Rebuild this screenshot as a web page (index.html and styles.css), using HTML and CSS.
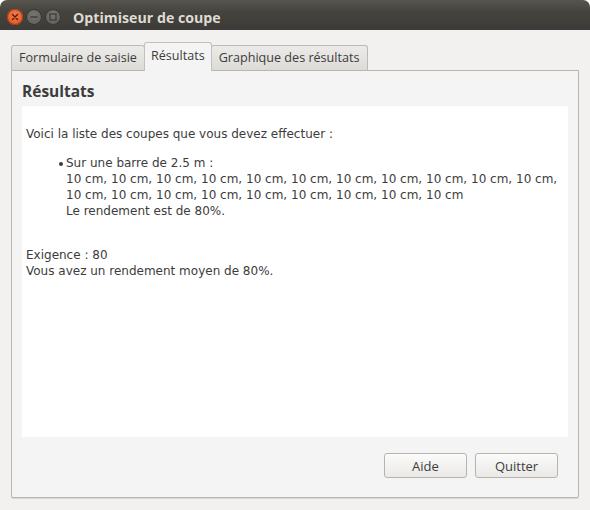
FILE: index.html
```html
<!DOCTYPE html>
<html lang="fr">
<head>
<meta charset="utf-8">
<title>Optimiseur de coupe</title>
<link rel="stylesheet" href="styles.css">
</head>
<body>
<div class="window">
  <div class="titlebar">
    <div class="wbtns">
      <span class="wbtn close"><svg width="16" height="16" viewBox="0 0 16 16"><path d="M5.5 5.5L10.5 10.5M10.5 5.5L5.5 10.5" stroke="#4a1a0c" stroke-width="1.3" stroke-linecap="round"/></svg></span>
      <span class="wbtn"><svg width="16" height="16" viewBox="0 0 16 16"><path d="M4.5 8H11.5" stroke="#3a3936" stroke-width="1.3"/></svg></span>
      <span class="wbtn"><svg width="16" height="16" viewBox="0 0 16 16"><rect x="5" y="5" width="6" height="6" fill="none" stroke="#3a3936" stroke-width="1.2"/></svg></span>
    </div>
    <div class="title">Optimiseur de coupe</div>
  </div>
  <div class="client">
    <div class="tabs">
      <div class="tab">Formulaire de saisie</div>
      <div class="tab active">Résultats</div>
      <div class="tab">Graphique des résultats</div>
    </div>
    <div class="panel">
      <h1 class="heading">Résultats</h1>
      <div class="results">
        <p class="intro">Voici la liste des coupes que vous devez effectuer :</p>
        <ul class="cuts">
          <li>Sur une barre de 2.5 m :<br>10 cm, 10 cm, 10 cm, 10 cm, 10 cm, 10 cm, 10 cm, 10 cm, 10 cm, 10 cm, 10 cm,<br>10 cm, 10 cm, 10 cm, 10 cm, 10 cm, 10 cm, 10 cm, 10 cm, 10 cm<br>Le rendement est de 80%.</li>
        </ul>
        <p class="summary">Exigence : 80<br>Vous avez un rendement moyen de 80%.</p>
      </div>
      <div class="actions">
        <button class="btn">Aide</button>
        <button class="btn">Quitter</button>
      </div>
    </div>
  </div>
</div>
</body>
</html>
```
FILE: styles.css
```css
html, body {
  margin: 0;
  padding: 0;
  background: #ffffff;
}
body {
  width: 590px;
  height: 510px;
  overflow: hidden;
  font-family: "Open Sans", "Noto Sans", sans-serif;
  color: #3c3c3c;
}
.window {
  display: flex;
  flex-direction: column;
  height: 510px;
}
.titlebar {
  height: 30px;
  flex: none;
  display: flex;
  align-items: center;
  background: linear-gradient(#58554f, #45433e 40%, #3c3b37);
  border-radius: 7px 7px 0 0;
  padding-left: 7px;
  box-sizing: border-box;
}
.wbtns {
  display: flex;
  gap: 3px;
  margin-top: 3px;
}
.wbtn {
  width: 16px;
  height: 16px;
  border-radius: 50%;
  background: radial-gradient(circle at 50% 35%, #777570, #5d5b56);
  box-shadow: inset 0 0 0 1px #34332f;
  display: flex;
}
.wbtn.close {
  background: radial-gradient(circle at 50% 35%, #f27a4c, #e0501c);
  box-shadow: inset 0 0 0 1px #a83a12;
}
.title {
  margin-left: 12px;
  margin-top: 4px;
  font-weight: bold;
  font-size: 14.2px;
  color: #dfdbd2;
}
.client {
  flex: 1;
  background: #f2f1f0;
  padding: 12px 11px 12px 11px;
  display: flex;
  flex-direction: column;
}
.tabs {
  display: flex;
  align-items: flex-end;
  height: 28px;
  flex: none;
  position: relative;
  z-index: 1;
}
.tab {
  height: 25px;
  box-sizing: border-box;
  border: 1px solid #bdbab5;
  border-bottom: none;
  border-radius: 3px 3px 0 0;
  background: linear-gradient(#ecebe9, #dddbd7);
  font-size: 12.6px;
  line-height: 24px;
  padding: 0 7px 0 7px;
  margin-right: -1px;
}
.tab.active {
  height: 29px;
  margin-bottom: -1px;
  background: #f4f4f4;
  border-color: #c4c1bc;
  line-height: 26px;
  padding: 0 6px 2px;
  z-index: 2;
}
.panel {
  flex: 1;
  border: 1px solid #b9b6b1;
  border-radius: 0 0 2px 2px;
  background: #f4f4f4;
  padding: 6px 10px 19px;
  display: flex;
  flex-direction: column;
  box-shadow: 0 1px 0 #dad8d5;
}
.heading {
  margin: 0 0 1px;
  font-size: 15.5px;
  font-weight: bold;
  line-height: 28px;
  color: #3c3c3c;
}
.results {
  flex: 1;
  background: #ffffff;
  padding: 20px 4px 0;
  font-family: "DejaVu Sans", sans-serif;
  font-size: 12px;
  line-height: 16px;
  margin-bottom: 16px;
}
.intro {
  margin: 0;
}
.cuts {
  margin: 13px 0 0;
  padding-left: 40px;
  list-style: none;
}
.cuts li {
  position: relative;
}
.cuts li::before {
  content: "";
  position: absolute;
  left: -7px;
  top: 7px;
  width: 4px;
  height: 4px;
  border-radius: 50%;
  background: #3c3c3c;
}
.summary {
  margin: 28px 0 0;
}
.actions {
  display: flex;
  justify-content: flex-end;
  gap: 8px;
  flex: none;
  padding-right: 10px;
}
.btn {
  width: 83px;
  height: 25px;
  border: 1px solid #b7b4af;
  border-radius: 3px;
  background: linear-gradient(#fbfbfa, #eae9e6);
  font-family: "Open Sans", "Noto Sans", sans-serif;
  font-size: 13px;
  color: #3c3c3c;
  padding: 0;
}
```
